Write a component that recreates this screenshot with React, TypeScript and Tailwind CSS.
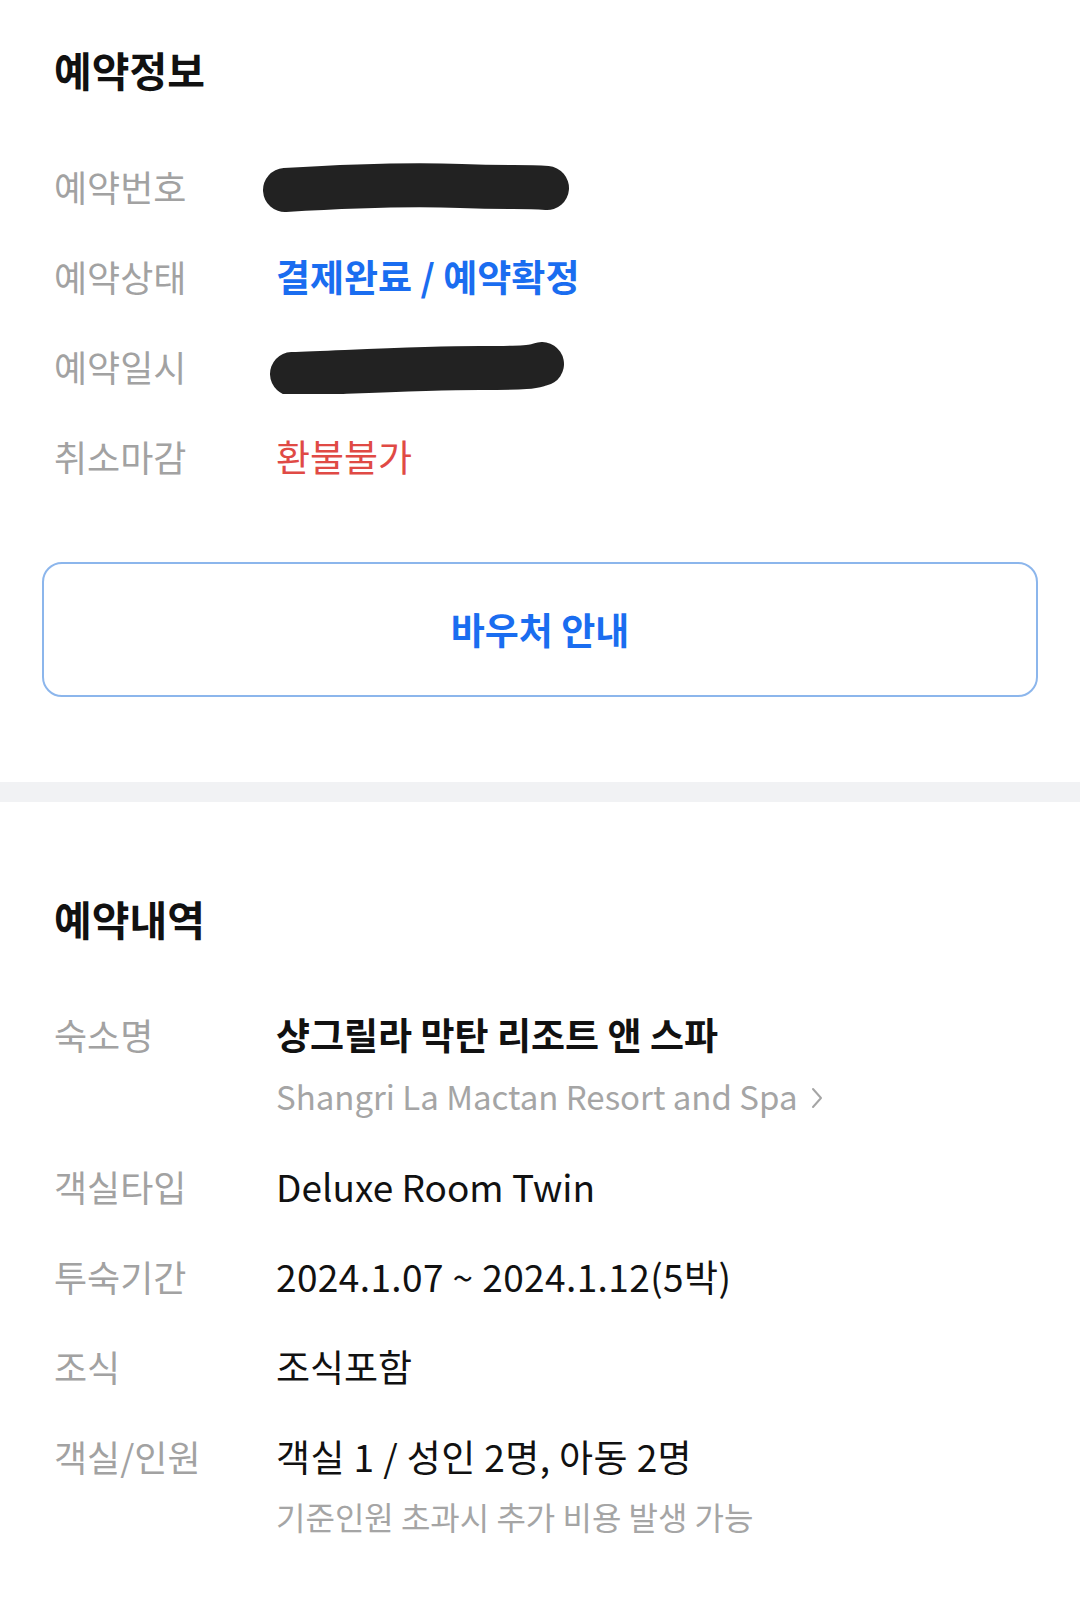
const font = { fontFamily: '"Noto Sans CJK KR", "Noto Sans", sans-serif' };

function Row({ label, children }: { label: string; children: React.ReactNode }) {
  return (
    <div className="flex items-start">
      <div className="w-[222px] shrink-0 text-[36px] leading-[48px] text-[#a2a2a2]">{label}</div>
      <div className="min-w-0 flex-1">{children}</div>
    </div>
  );
}

function Scribble({ d, w }: { d: string; w: number }) {
  return (
    <svg width={w} height={52} viewBox={`0 0 ${w} 52`} className="block">
      <path d={d} fill="none" stroke="#222" strokeWidth={44} strokeLinecap="round" strokeLinejoin="round" />
    </svg>
  );
}

export default function App() {
  return (
    <div className="min-h-[1620px] w-[1080px] bg-white" style={font}>
      <section className="px-[54px] pt-[45px] pb-[85px]">
        <h2 className="text-[41px] font-bold leading-[48px] text-[#111]">예약정보</h2>
        <div className="mt-[69px] flex flex-col gap-[42px]">
          <Row label="예약번호">
            <div className="-ml-[15px] -mb-[4px] h-[48px]">
              <Scribble w={310} d="M24 28 C 90 24, 150 22, 200 24 S 260 24, 286 26" />
            </div>
          </Row>
          <Row label="예약상태">
            <span className="text-[37px] font-bold leading-[48px] text-[#1a6df0]">결제완료 / 예약확정</span>
          </Row>
          <Row label="예약일시">
            <div className="-ml-[6px] h-[48px]">
              <Scribble w={296} d="M22 32 C 80 30, 150 26, 210 26 S 262 24, 272 22" />
            </div>
          </Row>
          <Row label="취소마감">
            <span className="text-[37px] leading-[48px] text-[#e04a45]">환불불가</span>
          </Row>
        </div>
        <button className="-mx-[12px] mt-[82px] flex h-[135px] w-[calc(100%+24px)] items-center justify-center rounded-[20px] border-2 border-[#8cb6ec] bg-white">
          <span className="text-[37px] font-bold text-[#1a6df0]">바우처 안내</span>
        </button>
      </section>
      <div className="h-[20px] bg-[#f1f2f4]" />
      <section className="px-[54px] pt-[92px] pb-[60px]">
        <h2 className="text-[41px] font-bold leading-[48px] text-[#111]">예약내역</h2>
        <div className="mt-[68px] flex flex-col gap-[42px]">
          <Row label="숙소명">
            <div className="text-[37px] font-bold leading-[48px] text-[#111]">샹그릴라 막탄 리조트 앤 스파</div>
            <div className="mt-[14px] flex items-center gap-[14px] text-[33px] leading-[48px] text-[#a5a5a5]">
              <span>Shangri La Mactan Resort and Spa</span>
              <svg width="12" height="22" viewBox="0 0 12 22" className="mt-[4px]">
                <path d="M2 2 L10 11 L2 20" fill="none" stroke="#a5a5a5" strokeWidth="2" strokeLinecap="round" strokeLinejoin="round" />
              </svg>
            </div>
          </Row>
          <Row label="객실타입">
            <div className="text-[37px] leading-[48px] text-[#111]">Deluxe Room Twin</div>
          </Row>
          <Row label="투숙기간">
            <div className="text-[37px] leading-[48px] tracking-[0.4px] text-[#111]">2024.1.07 ~ 2024.1.12(5박)</div>
          </Row>
          <Row label="조식">
            <div className="text-[37px] leading-[48px] text-[#111]">조식포함</div>
          </Row>
          <Row label="객실/인원">
            <div className="text-[37px] leading-[48px] tracking-[0.4px] text-[#111]">객실 1 / 성인 2명, 아동 2명</div>
            <div className="mt-[12px] text-[32px] leading-[48px] text-[#a5a5a5]">기준인원 초과시 추가 비용 발생 가능</div>
          </Row>
        </div>
      </section>
    </div>
  );
}
